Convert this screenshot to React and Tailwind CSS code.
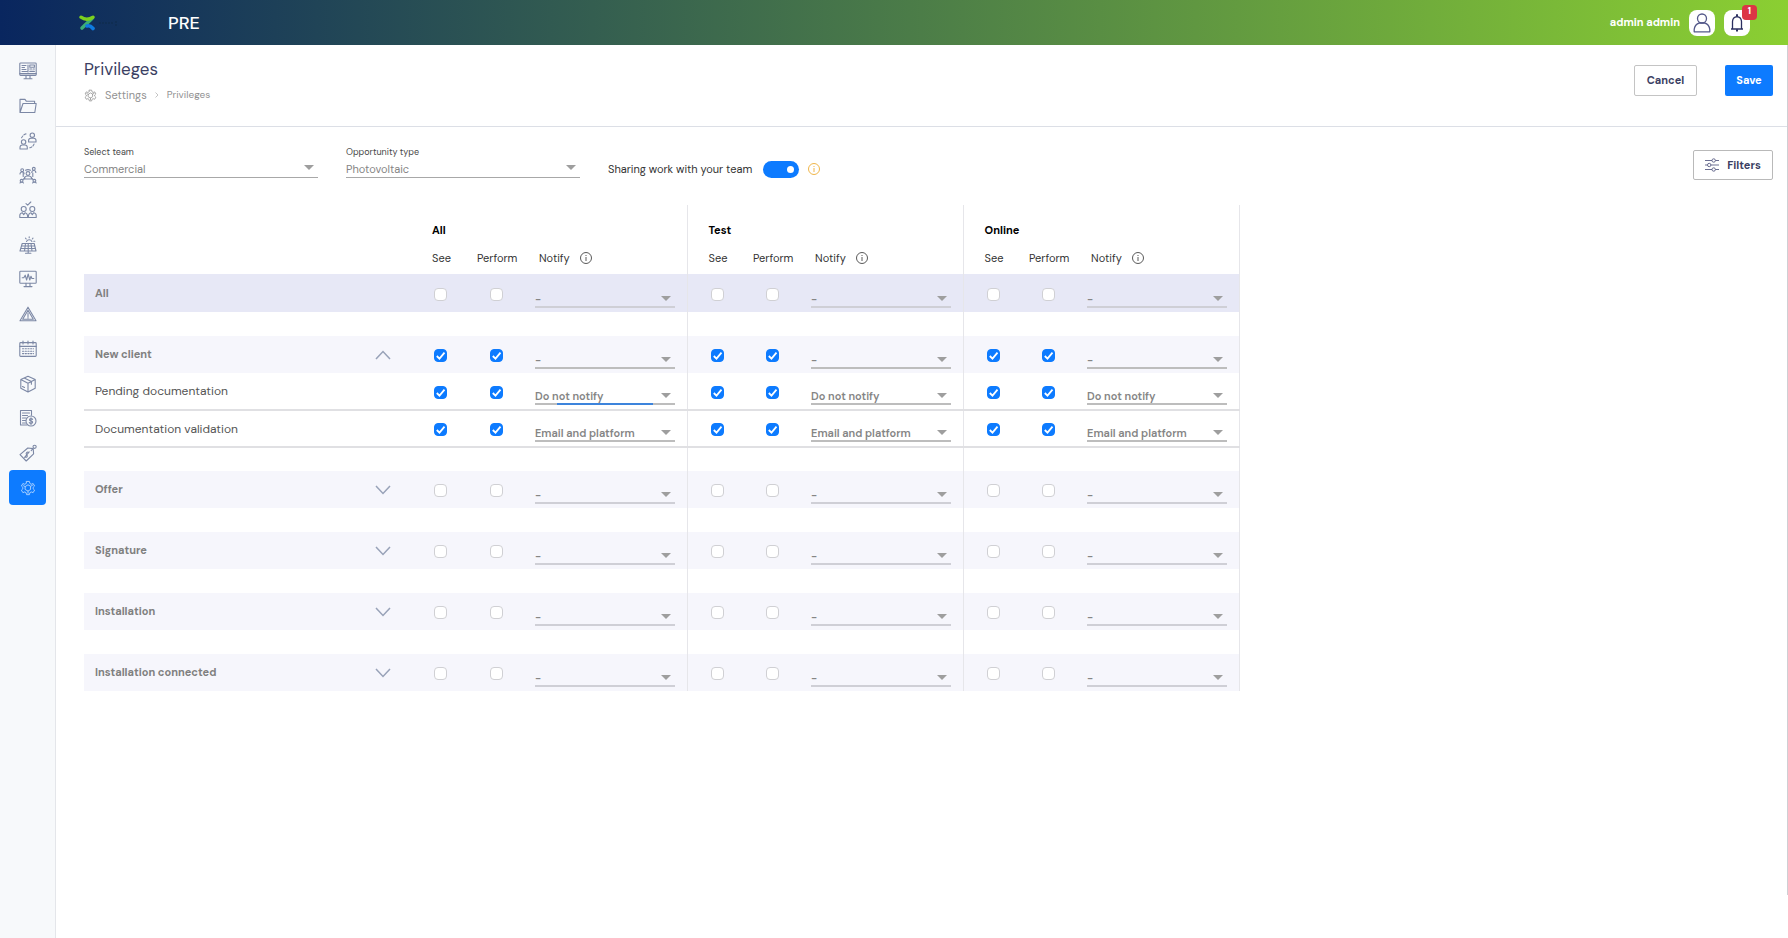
import React, { useState } from "react";

const groups = ["All", "Test", "Online"];

const sections = [
  {
    name: "New client",
    open: true,
    checked: true,
    rows: [
      { name: "Pending documentation", notify: "Do not notify", focused: true },
      { name: "Documentation validation", notify: "Email and platform" },
    ],
  },
  { name: "Offer" },
  { name: "Signature" },
  { name: "Installation" },
  { name: "Installation connected" },
];

const Icon = ({ children, className = "h-[18px] w-[18px]" }) => (
  <svg
    viewBox="0 0 18 18"
    className={className}
    fill="none"
    stroke="currentColor"
    strokeWidth="1.1"
    strokeLinecap="round"
    strokeLinejoin="round"
    aria-hidden="true"
  >
    {children}
  </svg>
);

const GearShape = () => (
  <>
    <path d="M7.4 1.6h3.2l.5 2.3 1.5.9 2.2-.8 1.6 2.8-1.6 1.5v1.6l1.6 1.5-1.6 2.8-2.2-.8-1.5.9-.5 2.2H7.4l-.5-2.2-1.5-.9-2.2.8-1.6-2.8 1.6-1.5V8.3L1.600 6.800 3.200 4l2.200.8 1.500-.9z" />
    <path d="M6.200 7.200 9 5.400l2.900 1.700v3.600L9 12.500l-2.900-1.700zM4 6.500l2 1M9 12.500v2.500M12 7l2-1" />
  </>
);

const menuItems = [
  {
    name: "Dashboard",
    icon: (
      <>
        <rect x="0.8" y="1" width="16.4" height="12.4" rx="0.8" />
        <path d="M0.800 11.600h16.400M7 13.600v2.600M11 13.600v2.600M5 16.800h8M3 3.500h4M3 5.500h2.500M3 7.500h4M3 9.500h5M9 3v7" />
        <rect x="10.8" y="3" width="4.6" height="2.2" />
        <path d="M10.800 7h2M14.200 7h1.200M10.800 9.400h4.600" />
      </>
    ),
  },
  {
    name: "Projects",
    icon: <path d="M1 15.500V2.400h5l1.400 1.900h8.200v2.200M1 15.500 4 6.500h13.200l-1.400 9zM1 15.500h14.800" />,
  },
  {
    name: "Contacts",
    icon: (
      <>
        <circle cx="13.3" cy="3.2" r="2.2" />
        <path d="M9.600 10V8.500q0-2.300 2.300-2.300h2.800q2.300 0 2.300 2.300V10z" />
        <circle cx="4.6" cy="10" r="2.2" />
        <path d="M1 17v-1.600q0-2.400 2.300-2.400h2.700q2.300 0 2.300 2.400V17zM2.600 5.800q.5-1 1.200-1.800M5 2.800q.8-.6 2-.9M10.800 15.800q1.200-.3 2-1M14 13.800q.7-.8 1-1.700" />
      </>
    ),
  },
  {
    name: "Team network",
    icon: (
      <>
        <circle cx="9" cy="7.5" r="1.9" />
        <path d="M5.500 13v-1q0-2 3.500-2t3.500 2v1zM6.500 4.200Q9 3 11.500 4.200M4.200 7v3.500M13.800 7v3.500" />
        <circle cx="3.2" cy="4.2" r="1.4" />
        <circle cx="14.8" cy="2.8" r="1.4" />
        <circle cx="2.6" cy="14.8" r="1.4" />
        <circle cx="15.4" cy="14.8" r="1.4" />
        <path d="M1 8q0-2 2.200-2T5 8M12.800 6.500q0-2 2-2t2 2M4 13.500l2-1.500M14 13.500 12.500 12M1 17q.5-1 1.600-1T4.500 17M13.600 17q.5-1 1.800-1t1.800 1" />
      </>
    ),
  },
  {
    name: "Clients",
    icon: (
      <>
        <circle cx="4.7" cy="8" r="2.5" />
        <circle cx="13.3" cy="8" r="2.5" />
        <path d="M0.800 16.500v-2q0-2.300 2.400-2.800l1.500 2 1.500-2q1.800.3 2.400 2.800v2zM9.400 16.500v-2q.6-2.500 2.400-2.800l1.500 2 1.500-2q2.400.5 2.400 2.800v2zM7 2.600l1.700 1.500L11.800 1" />
      </>
    ),
  },
  {
    name: "Installations",
    icon: (
      <>
        <path d="M3.200 7.500h12L17 15H1zM2.500 10h13.300M1.800 12.500h14.600M6.500 7.500 5.500 15M9.200 7.500V15M12 7.500l1 7.500M9.200 15v2.200M6.500 17.200h5.400" />
        <path d="M7.500 5.500a3 3 0 0 1 5.400 0M10.200.8v1M6.500 2.200l.7.8M14 2.200l-.7.8M15.800 5.200h-1" />
      </>
    ),
  },
  {
    name: "Monitoring",
    icon: (
      <>
        <rect x="0.8" y="1.2" width="16.4" height="12" rx="0.8" />
        <path d="M3.200 7.800h1.600l1.400-2.600L7.600 10 9.200 4l1.600 6 1.200-3.800.9 2.300h1.900M7 13.400v2.800M11 13.400v2.800M5 16.600h8" />
      </>
    ),
  },
  {
    name: "Incidents",
    icon: <path d="M9 2.200 17 15.800H1zM9 5.200l5.300 9H3.700zM9 8v3.500M9 12.600v.5" />,
  },
  {
    name: "Calendar",
    icon: (
      <>
        <rect x="0.8" y="2.6" width="16.4" height="13.8" rx="0.8" />
        <path d="M0.800 6.400h16.400M4 1v3M9 1v3M14 1v3" />
        <path d="M3.500 8.800h11M3.500 11.200h11M3.500 13.600h11" strokeDasharray="1.2 1.5" />
      </>
    ),
  },
  {
    name: "Products",
    icon: <path d="M9 1.200 16.200 4.600v8.600L9 17l-7.200-3.800V4.600zM1.800 4.600 9 8.200l7.200-3.600M9 8.200V17M5.200 3l7.200 3.600v2.600M3.500 11.500l2 1" />,
  },
  {
    name: "Billing",
    icon: (
      <>
        <path d="M8 16H1.500V1.500h11v4.800M3.500 4h7M3.500 6.500h5M3.500 9h3.500M3.500 11.500h3M3.500 14h3" />
        <circle cx="12" cy="12" r="5" />
        <path d="M13.600 10.400q-.5-.8-1.600-.8-1.500 0-1.500 1.200 0 1 1.500 1.200 1.600.2 1.600 1.300T12 14.500q-1.200 0-1.700-.9M12 8.800v6.600" />
      </>
    ),
  },
  {
    name: "Prices",
    icon: (
      <>
        <path d="M1 10.600 8.800 4l5.400.6.400 5.200L7.200 17zM12.200 6.600l2-2.200" />
        <circle cx="15.6" cy="2.8" r="1.6" />
        <path d="M9.600 8.600q-1-1-2 0t.2 2.200q1 1.200.2 2t-2 0M10.200 7.800 5.600 13.400" />
      </>
    ),
  },
  { name: "Settings", active: true, icon: <GearShape /> },
];

const InfoIcon = ({ className }) => (
  <svg viewBox="0 0 14 14" className={className} fill="none" stroke="currentColor" aria-hidden="true">
    <circle cx="7" cy="7" r="5.5" />
    <path d="M7 6v4M7 4v1" />
  </svg>
);

const Chevron = ({ open }) => (
  <svg viewBox="0 0 16 10" className="h-[10px] w-4 text-[#98a2b8]" fill="none" stroke="currentColor" strokeWidth="1.5" aria-hidden="true">
    <path d={open ? "M1 9l7-7.500L15 9" : "M1 1l7 7.500L15 1"} />
  </svg>
);

const Arrow = ({ className }) => (
  <svg viewBox="0 0 10 5" className={`pointer-events-none absolute h-[5px] w-[10px] text-[#9e9e9e] ${className}`} fill="currentColor" aria-hidden="true">
    <path d="M0 0h10L5 5z" />
  </svg>
);

// Underlined filter drop-down with its label on top
const FilterSelect = ({ id, label, value }) => (
  <div className="relative w-[234px]">
    <label htmlFor={id} className="block text-[9px] leading-4 text-[#4a4a4a]">
      {label}
    </label>
    <select
      id={id}
      className="block h-[18px] w-full appearance-none border-b border-[#a8a8a8] bg-transparent text-[11px] leading-4 text-[#858585] outline-none"
    >
      <option>{value}</option>
    </select>
    <Arrow className="right-1 bottom-2" />
  </div>
);

const NotifySelect = ({ label, value, focused, light }) => (
  <div className="relative w-[140px]">
    <select
      aria-label={label}
      defaultValue={value}
      className={`block h-6 w-full appearance-none border-b-2 bg-transparent pt-2 text-[11px] leading-[14px] font-semibold text-[#858585] outline-none ${light ? "border-[#cfcfd6]" : "border-[#bdbdbd]"}`}
    >
      <option>-</option>
      <option>Do not notify</option>
      <option>Email and platform</option>
    </select>
    <Arrow className="right-1 bottom-[7px]" />
    {focused && <span className="absolute bottom-0 left-[22px] h-0.5 w-24 bg-[#3d84dc]" />}
  </div>
);

const CheckCell = ({ label, initial }) => {
  const [checked, setChecked] = useState(!!initial);
  return (
    <td className="p-0 pl-[23px] text-left align-middle">
      <span className="relative mt-0.5 block h-[13px] w-[13px]">
        <input
          type="checkbox"
          aria-label={label}
          checked={checked}
          onChange={() => setChecked(!checked)}
          className="block h-[13px] w-[13px] appearance-none rounded border border-[#d0d0d4] bg-white checked:border-[#0d7bff] checked:bg-[#0d7bff]"
        />
        {checked && (
          <svg viewBox="0 0 13 13" className="pointer-events-none absolute inset-0" fill="none" stroke="white" strokeWidth="1.8" aria-hidden="true">
            <path d="M2.800 7l2.700 2.700 5-6" />
          </svg>
        )}
      </span>
    </td>
  );
};

const GroupCells = ({ group, row, checked, notify = "-", focused }) => (
  <>
    <CheckCell label={`See ${row} ${group}`} initial={checked} />
    <CheckCell label={`Perform ${row} ${group}`} initial={checked} />
    <td className="border-r border-[#e6e6ea] p-0 pb-1 pl-3 align-bottom">
      <NotifySelect label={`Notify ${row} ${group}`} value={notify} focused={focused && group === "All"} light={!checked} />
    </td>
  </>
);

const SpacerRow = () => (
  <tr className="h-6">
    <td className="p-0" />
    {groups.map((g) => (
      <td key={g} colSpan={3} className="border-r border-[#e6e6ea] p-0" />
    ))}
  </tr>
);

const Section = ({ section }) => {
  const [open, setOpen] = useState(!!section.open);
  return (
    <>
      <SpacerRow />
      <tr className="h-[37px] bg-[#f6f6fc]">
        <th scope="row" className="p-0 pl-[11px] text-left text-[11px] font-bold text-[#808080]">
          <div className="flex items-center justify-between pr-5">
            {section.name}
            <button type="button" aria-label={`Toggle ${section.name}`} onClick={() => setOpen(!open)} className="cursor-pointer">
              <Chevron open={open} />
            </button>
          </div>
        </th>
        {groups.map((g) => (
          <GroupCells key={g} group={g} row={section.name} checked={section.checked} />
        ))}
      </tr>
      {open &&
        section.rows?.map((row) => (
          <tr key={row.name} className="h-[37px] border-b-2 border-[#e0e0e3]">
            <th scope="row" className="p-0 pl-[11px] text-left text-xs font-normal text-[#555]">
              {row.name}
            </th>
            {groups.map((g) => (
              <GroupCells key={g} group={g} row={row.name} checked notify={row.notify} focused={row.focused} />
            ))}
          </tr>
        ))}
    </>
  );
};

// Top bar
const Header = () => (
  <header className="flex h-[45px] shrink-0 items-center bg-linear-to-r/srgb from-[#09265f] to-[#8bcf32] pr-[38px] pl-[79px]">
    <svg viewBox="0 0 40 16" className="h-4 w-10" fill="none" aria-hidden="true">
      <path d="M13 3.500 3 13" stroke="#3cae75" strokeWidth="3.6" strokeLinecap="round" />
      <path d="M2 2.200q5.500 4 12 0" stroke="#7bd01e" strokeWidth="3.4" strokeLinecap="round" />
      <path d="M8 11q3-1 6 2.500" stroke="#0f7be0" strokeWidth="3.6" strokeLinecap="round" />
      <path d="M20 8h15M37 6v5" stroke="#0e2b48" strokeDasharray="2 1" />
    </svg>
    <span className="ml-[49px] text-lg font-medium text-white">PRE</span>
    <span className="ml-auto text-[11px] font-bold text-white">admin admin</span>
    <button type="button" aria-label="Account" className="ml-[9px] flex h-[26px] w-[26px] items-center justify-center rounded-lg bg-white text-[#54598a]">
      <svg viewBox="0 0 18 20" className="h-5 w-[18px]" fill="none" stroke="currentColor" strokeWidth="1.3" aria-hidden="true">
        <circle cx="9" cy="5.5" r="4.5" />
        <path d="M1.200 18.800v-2.500q.6-5 5.200-6.300h5.200q4.600 1.300 5.200 6.300v2.500z" strokeLinejoin="round" />
      </svg>
    </button>
    <button type="button" aria-label="Notifications" className="relative ml-[9px] flex h-[26px] w-[26px] items-center justify-center rounded-lg bg-white text-[#2b2f60]">
      <svg viewBox="0 0 14 18" className="h-[18px] w-[14px]" fill="none" stroke="currentColor" strokeWidth="1.3" aria-hidden="true">
        <path d="M1 15h12M2.500 15V7.500Q2.800 3 7 2.600q4.200.4 4.500 4.900V15" />
        <path d="M7 .2v2.400M7 15.200v2.400" strokeWidth="2" />
      </svg>
      <span className="absolute -top-[5px] -right-[7px] flex h-[15px] w-[15px] items-center justify-center rounded bg-[#dc3545] text-[9px] font-bold text-white">
        1
      </span>
    </button>
  </header>
);

const Sidebar = () => (
  <aside className="w-14 shrink-0 border-r border-[#e4e6ea] bg-[#f7f9fb] px-[9px] pt-[9px]">
    <nav className="flex h-[451px] flex-col">
      {menuItems.map((item) => (
        <a
          key={item.name}
          href="#"
          aria-label={item.name}
          className={`flex flex-1 items-center justify-center rounded ${item.active ? "bg-[#0d7bff] text-[#a9d0ff]" : "text-[#7c88a5]"}`}
        >
          <Icon className={item.active ? "h-4 w-4" : "h-[18px] w-[18px]"}>{item.icon}</Icon>
        </a>
      ))}
    </nav>
  </aside>
);

const App = () => {
  const [sharing, setSharing] = useState(true);

  return (
    <div className="flex min-h-screen flex-col bg-white font-['DM_Sans','Inter',sans-serif]">
      <Header />
      <div className="flex flex-1">
        <Sidebar />
        <main className="mb-[43px] min-w-0 flex-1 border-r border-[#cfcfd4]">
          {/* Title bar */}
          <div className="flex h-[82px] items-start justify-between border-b border-[#dcdfe6] pr-[14px] pl-7">
            <div className="pt-3">
              <h1 className="text-[17px] leading-6 text-[#3b3f63]">Privileges</h1>
              <div className="mt-1.5 flex items-center text-[11px] leading-4 text-[#929292]">
                <Icon className="mr-2 h-[13px] w-[13px]">
                  <GearShape />
                </Icon>
                <a href="#">Settings</a>
                <svg viewBox="0 0 4 6" className="mx-2 h-1.5 w-1" fill="none" stroke="#b5b5b5" strokeWidth="0.8" aria-hidden="true">
                  <path d="M.5.5 3 3 .5 5.500" />
                </svg>
                <a href="#" className="text-[10px]">Privileges</a>
              </div>
            </div>
            <div className="flex gap-7 pt-5 text-[11px] font-bold">
              <button type="button" className="h-[31px] w-[63px] rounded-xs border border-[#c4c4c4] text-[#3b3f63]">
                Cancel
              </button>
              <button type="button" className="h-[31px] w-12 rounded-xs bg-[#0d7bff] text-white">
                Save
              </button>
            </div>
          </div>

          {/* Filters */}
          <div className="flex items-start pt-[17px] pr-[14px] pl-7">
            <FilterSelect id="team" label="Select team" value="Commercial" />
            <div className="ml-7">
              <FilterSelect id="opportunity" label="Opportunity type" value="Photovoltaic" />
            </div>
            <label className="mt-4 ml-7 flex items-center text-[11px] leading-[18px] text-[#333]">
              Sharing work with your team
              <span className="relative ml-[11px] block h-[17px] w-9">
                <input
                  type="checkbox"
                  role="switch"
                  checked={sharing}
                  onChange={() => setSharing(!sharing)}
                  className="peer block h-[17px] w-9 appearance-none rounded-full bg-gray-300 checked:bg-[#0d7bff]"
                />
                <span className="pointer-events-none absolute top-[5px] left-[5px] h-[7px] w-[7px] rounded-full bg-white peer-checked:left-6" />
              </span>
              <InfoIcon className="ml-2 h-[14px] w-[14px] text-[#f0b64a]" />
            </label>
            <button
              type="button"
              className="mt-1.5 ml-auto flex h-[30px] w-20 items-center justify-center gap-2 rounded-xs border border-[#b9b9b9] text-[11px] font-bold text-[#3b3f63]"
            >
              <svg viewBox="0 0 14 14" className="h-[14px] w-[14px] text-[#5a5e85]" fill="none" stroke="currentColor" strokeWidth="0.9" aria-hidden="true">
                <path d="M0 2.500h7M10.400 2.500H14M0 7h2.500M5.900 7H14M0 11.500h7M10.400 11.500H14" />
                <circle cx="8.7" cy="2.5" r="1.7" />
                <circle cx="4.2" cy="7" r="1.7" />
                <circle cx="8.7" cy="11.5" r="1.7" />
              </svg>
              Filters
            </button>
          </div>

          {/* Privileges table */}
          <div className="overflow-x-auto pt-[25px] pl-7">
            <table className="w-[1155px] table-fixed border-collapse">
              <colgroup>
                <col className="w-[327px]" />
                {groups.map((g) => (
                  <React.Fragment key={g}>
                    <col className="w-14" />
                    <col className="w-14" />
                    <col className="w-[164px]" />
                  </React.Fragment>
                ))}
              </colgroup>
              <thead className="text-left text-[11px] text-[#333]">
                <tr className="h-10">
                  <td className="p-0" />
                  {groups.map((g) => (
                    <th key={g} colSpan={3} className="border-r border-[#e6e6ea] p-0 pt-[10px] pl-[21px] font-bold text-black">
                      {g}
                    </th>
                  ))}
                </tr>
                <tr className="h-[29px]">
                  <td className="p-0" />
                  {groups.map((g) => (
                    <React.Fragment key={g}>
                      <th className="p-0 pb-[3px] pl-[21px] font-normal">See</th>
                      <th className="p-0 pb-[3px] pl-[10px] font-normal">Perform</th>
                      <th className="border-r border-[#e6e6ea] p-0 pb-[3px] pl-4 font-normal">
                        <span className="flex items-center gap-[9px]">
                          Notify
                          <InfoIcon className="h-[14px] w-[14px] text-[#5a5a5a]" />
                        </span>
                      </th>
                    </React.Fragment>
                  ))}
                </tr>
              </thead>
              <tbody>
                <tr className="h-[38px] bg-[#e7e8f6]">
                  <th scope="row" className="p-0 pl-[11px] text-left text-[11px] font-bold text-[#808080]">
                    All
                  </th>
                  {groups.map((g) => (
                    <GroupCells key={g} group={g} row="All" />
                  ))}
                </tr>
                {sections.map((section) => (
                  <Section key={section.name} section={section} />
                ))}
              </tbody>
            </table>
          </div>
        </main>
      </div>
    </div>
  );
};

export default App;
